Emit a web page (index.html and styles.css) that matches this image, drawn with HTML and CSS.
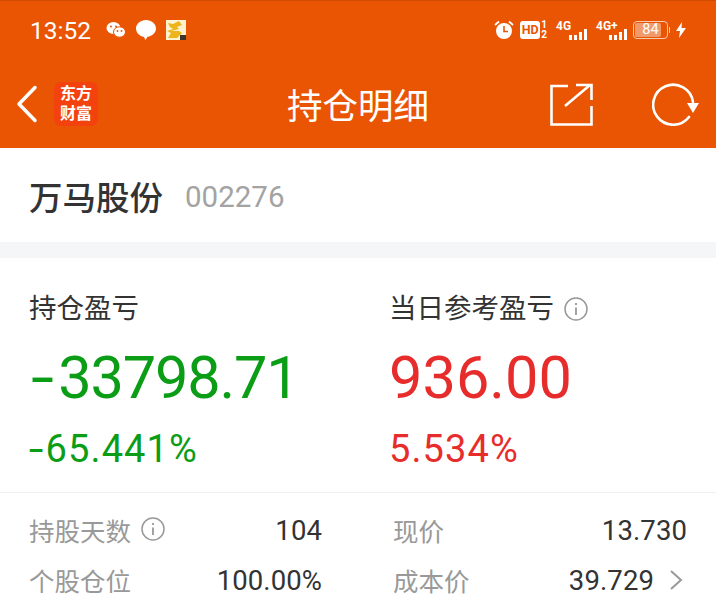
FILE: index.html
```html
<!DOCTYPE html>
<html>
<head>
<meta charset="UTF-8">
<title>持仓明细</title>
<link rel="stylesheet" href="styles.css">
</head>
<body>
<div class="top">
	<div class="status">
		<span class="time">13:52</span>
		<svg class="st_icon" width="20" height="18" viewBox="0 0 20 18">
			<ellipse cx="7.5" cy="7" rx="7" ry="6" fill="#fff"/>
			<ellipse cx="13.5" cy="11" rx="6" ry="5.2" fill="#fff" stroke="#ea5504"/>
			<circle cx="5" cy="5.5" r="1" fill="#ea5504"/>
			<circle cx="10" cy="5.5" r="1" fill="#ea5504"/>
			<circle cx="11.5" cy="10" r=".9" fill="#ea5504"/>
			<circle cx="15.5" cy="10" r=".9" fill="#ea5504"/>
		</svg>
		<svg class="st_icon" width="20" height="20" viewBox="0 0 20 20">
			<path d="M10 0C4.500 0 0 3.700 0 8.500c0 4.300 3.600 7.800 8 8.400l1.500 3 2-3.100c4.800-.8 8.500-4 8.500-8.300C20 3.700 15.500 0 10 0z" fill="#fff"/>
		</svg>
		<svg class="st_icon app_icon" width="20" height="20" viewBox="0 0 20 20">
			<rect width="20" height="20" fill="#fdf3d0"/>
			<path d="M2 3l5 1 6-3 3 4-5 2 2 2-8 2 8 0 3 2-5 5-9 0 3-5-4-2 6-2-3-2z" fill="#eeb41c"/>
			<rect x="14" y="15" width="6" height="5" fill="#3c332c"/>
		</svg>
		<div class="st_right">
			<svg class="alarm" width="20" height="20" viewBox="0 0 20 20">
				<circle cx="10" cy="11" r="8" fill="#fff"/>
				<path d="M10 6v5.500h4" fill="none" stroke="#ea5504" stroke-width="1.600"/>
				<path d="M1 5l4-3.500M19 5l-4-3.500" stroke="#fff" stroke-width="1.800"/>
			</svg>
			<div class="hd"><b>HD</b><span class="hd_nums">1<br>2</span></div>
			<div class="net"><span>4G</span><i class="bars"><u></u><u></u><u></u><u></u></i></div>
			<div class="net net2"><span>4G+</span><i class="bars"><u></u><u></u><u></u><u></u></i></div>
			<div class="battery"><div class="batt_fill"></div><span>84</span></div>
			<svg class="bolt" width="10" height="16" viewBox="0 0 10 16"><path d="M6 0L0 9h4l-1 7 7-10H5.500z" fill="#fff"/></svg>
		</div>
	</div>
	<div class="nav">
		<svg class="back" width="24" height="38" viewBox="0 0 24 38"><path d="M20 2.500L4 19l16 16.500" fill="none" stroke="#fff" stroke-width="3.500" stroke-linecap="round" stroke-linejoin="round"/></svg>
		<div class="logo">东方<br>财富</div>
		<h1 class="nav_title">持仓明细</h1>
		<svg class="share" width="44" height="44" viewBox="0 0 44 44">
			<path d="M18 4H1.500v38.500h40V24M15 24L40 3M26 3h15.500v15" fill="none" stroke="#fff" stroke-width="2.600"/>
		</svg>
		<svg class="refresh" width="48" height="44" viewBox="0 0 48 44">
			<path d="M41 20A20 20 0 1 0 37 35" fill="none" stroke="#fff" stroke-width="2.600" stroke-linecap="round"/>
			<path d="M35 21h12l-6 10z" fill="#fff"/>
		</svg>
	</div>
</div>

<div class="stock">
	<span class="stock_name">万马股份</span>
	<span class="stock_code">002276</span>
</div>

<div class="profit">
	<div class="profit_col">
		<div class="profit_label">持仓盈亏</div>
		<div class="profit_num green"><span class="minus">-</span>33798.71</div>
		<div class="profit_pct green"><span class="minus">-</span>65.441%</div>
	</div>
	<div class="profit_col">
		<div class="profit_label">当日参考盈亏
			<svg class="info" width="24" height="24" viewBox="0 0 24 24"><circle cx="12" cy="12" r="11" fill="none" stroke="#999" stroke-width="1.500"/><path d="M12 10.500V18M12 6v2" stroke="#999" stroke-width="1.800"/></svg>
		</div>
		<div class="profit_num red">936.00</div>
		<div class="profit_pct red">5.534%</div>
	</div>
</div>

<div class="detail">
	<div class="detail_col">
		<div class="detail_row">
			<span class="d_label">持股天数
				<svg class="info" width="24" height="24" viewBox="0 0 24 24"><circle cx="12" cy="12" r="11" fill="none" stroke="#999" stroke-width="1.500"/><path d="M12 10.500V18M12 6v2" stroke="#999" stroke-width="1.800"/></svg>
			</span>
			<span class="d_val">104</span>
		</div>
		<div class="detail_row">
			<span class="d_label">个股仓位</span>
			<span class="d_val">100.00%</span>
		</div>
	</div>
	<div class="detail_col col_right">
		<div class="detail_row">
			<span class="d_label">现价</span>
			<span class="d_val">13.730</span>
		</div>
		<div class="detail_row">
			<span class="d_label">成本价</span>
			<span class="d_val cost">39.729
				<svg class="arrow" width="14" height="22" viewBox="0 0 14 22"><path d="M2 2l10 9-10 9" fill="none" stroke="#999" stroke-width="2"/></svg>
			</span>
		</div>
	</div>
</div>
</body>
</html>
```

FILE: styles.css
```css
* {
	box-sizing: border-box;
}
body {
	margin: 0;
	height: 616px;
	overflow: hidden;
	background: #fff;
	font-family: Roboto, "Noto Sans CJK SC", sans-serif;
}
.top {
	height: 148px;
	background: #ea5504;
	border-top: 1px solid #d04c03;
	color: #fff;
}
.status {
	height: 58px;
	padding: 0 30px 0 30px;
	display: flex;
	align-items: center;
}
.time {
	font-size: 24.5px;
	margin-right: 15px;
}
.st_icon {
	margin-right: 10px;
}
.st_right {
	margin-left: auto;
	display: flex;
	align-items: center;
	gap: 8px;
}
.alarm {
	margin-right: -2px;
}
.hd {
	display: flex;
	align-items: center;
	gap: 1px;
}
.hd b {
	background: #fff;
	color: #ea5504;
	font-size: 12.5px;
	line-height: 18px;
	width: 20px;
	text-align: center;
	border-radius: 3px;
}
.hd_nums {
	font-size: 10px;
	line-height: 10px;
	font-weight: 700;
}
.net {
	width: 32px;
	height: 20px;
	position: relative;
	font-size: 12px;
	line-height: 12px;
	font-weight: 700;
}
.net span {
	position: absolute;
	left: 1px;
	top: 0;
}
.bars {
	position: absolute;
	right: 0;
	bottom: 0;
	display: flex;
	align-items: flex-end;
	gap: 2px;
}
.bars u {
	display: block;
	width: 3px;
	height: 5px;
	background: #fff;
}
.bars u:nth-child(3) {
	height: 8px;
}
.bars u:nth-child(4) {
	height: 11px;
}
.battery {
	width: 35px;
	height: 18px;
	border: 1px solid #f7c9ad;
	border-radius: 4px;
	position: relative;
	padding: 1px;
	text-align: center;
	margin-left: -2px;
}
.battery:after {
	content: "";
	position: absolute;
	right: -3px;
	top: 5px;
	width: 1px;
	height: 6px;
	background: #f7c9ad;
}
.batt_fill {
	width: 84%;
	height: 100%;
	background: #f19a6b;
	border-radius: 2px;
}
.battery span {
	position: absolute;
	left: 0;
	right: 0;
	top: 0;
	font-size: 14.5px;
	line-height: 16px;
}
.nav {
	height: 89px;
	display: flex;
	align-items: center;
	padding-left: 15px;
	position: relative;
}
.back {
	margin-right: 15px;
}
.logo {
	width: 44px;
	height: 44px;
	background: #f4420e;
	border-radius: 7px;
	font-size: 16px;
	font-weight: 700;
	line-height: 20px;
	text-align: center;
	padding-top: 2px;
}
.nav_title {
	position: absolute;
	left: 0;
	right: 0;
	margin: 0;
	text-align: center;
	font-size: 35.5px;
	font-weight: 400;
}
.share {
	margin-left: auto;
	margin-right: 58px;
	z-index: 1;
}
.refresh {
	margin-right: 16px;
	z-index: 1;
}
.stock {
	padding-left: 29px;
	display: flex;
	align-items: center;
	gap: 22px;
	border-bottom: 16px solid #f5f6f8;
	box-sizing: content-box;
	height: 94px;
}
.stock_name {
	font-size: 33.5px;
	color: #333;
	font-weight: 500;
}
.stock_code {
	font-size: 29.5px;
	color: #a3a3a3;
	margin-top: 3px;
}
.profit {
	height: 235px;
	padding: 34px 0 0 29px;
	display: flex;
	border-bottom: 1px solid #f0f0f0;
}
.profit_col {
	width: 360px;
	flex: none;
}
.profit_label {
	font-size: 27.5px;
	line-height: 34px;
	color: #333;
	display: flex;
	align-items: center;
	gap: 10px;
}
.profit_num {
	font-size: 59.5px;
	line-height: 70px;
	margin-top: 17px;
}
.profit_num.green {
	letter-spacing: -1.2px;
}
.minus {
	display: inline-block;
	margin: 0 9px 0 5px;
	transform: scaleX(1.4);
}
.profit_pct {
	font-size: 38px;
	line-height: 44px;
	margin-top: 14px;
	letter-spacing: 1.1px;
}
.profit_pct .minus {
	margin: 0 3px 0 2px;
}
.green {
	color: #0c9d17;
}
.red {
	color: #e72c2c;
}
.detail {
	display: flex;
	padding: 12px 0 0 29px;
}
.detail_col {
	width: 293px;
}
.col_right {
	width: 294px;
	margin-left: 71px;
}
.detail_row {
	height: 50px;
	display: flex;
	align-items: center;
	justify-content: space-between;
}
.d_label {
	font-size: 25.5px;
	color: #999;
	display: flex;
	align-items: center;
	gap: 10px;
	margin-top: -2px;
}
.d_val {
	font-size: 27.5px;
	color: #333;
	letter-spacing: .1px;
}
.cost {
	display: flex;
	align-items: center;
	gap: 15px;
	margin-right: 4px;
}
```
